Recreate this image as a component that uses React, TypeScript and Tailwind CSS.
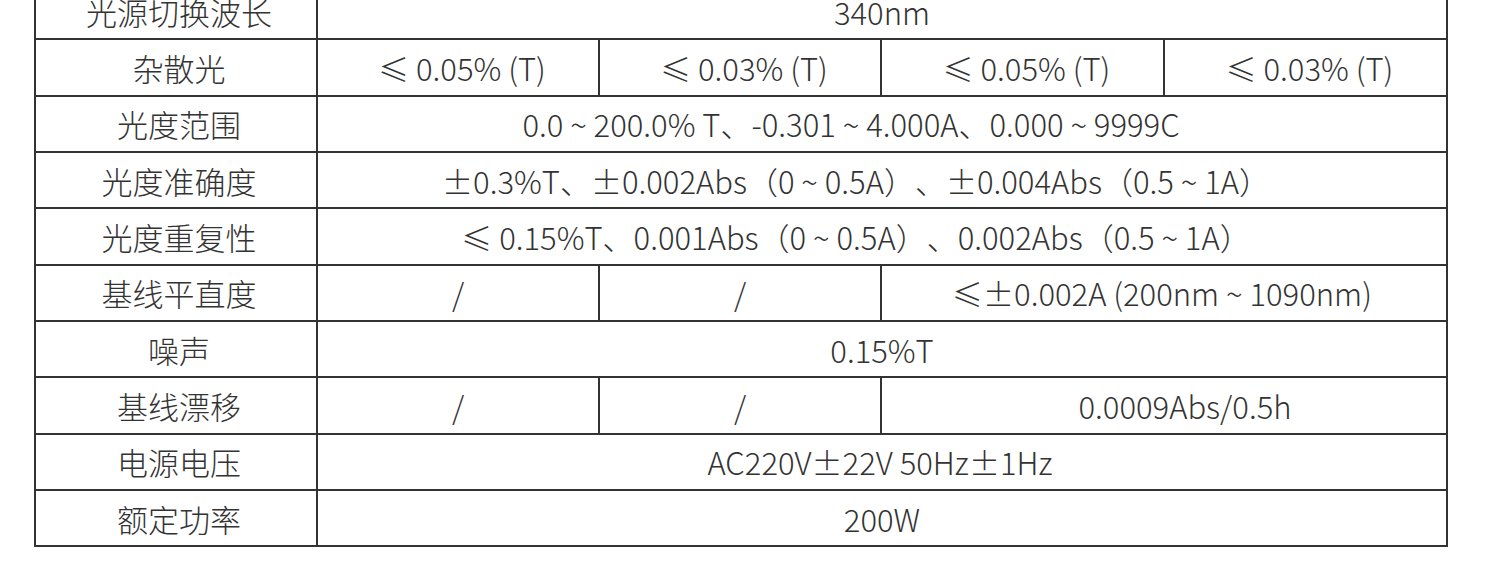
import React from 'react';

type Cell = { text: string; span?: number; pad?: string };
type Row = { label: string; cells: Cell[] };

const rows: Row[] = [
  { label: '光源切换波长', cells: [{ text: '340nm', span: 4 }] },
  {
    label: '杂散光',
    cells: [
      { text: '≤ 0.05% (T)', pad: 'pl-[8px]' },
      { text: '≤ 0.03% (T)', pad: 'pl-[8px]' },
      { text: '≤ 0.05% (T)', pad: 'pl-[8px]' },
      { text: '≤ 0.03% (T)', pad: 'pl-[8px]' },
    ],
  },
  { label: '光度范围', cells: [{ text: '0.0 ~ 200.0% T、-0.301 ~ 4.000A、0.000 ~ 9999C', span: 4, pad: 'pr-[62px]' }] },
  { label: '光度准确度', cells: [{ text: '±0.3%T、±0.002Abs（0 ~ 0.5A）、±0.004Abs（0.5 ~ 1A）', span: 4, pad: 'pr-[52px]' }] },
  { label: '光度重复性', cells: [{ text: '≤ 0.15%T、0.001Abs（0 ~ 0.5A）、0.002Abs（0.5 ~ 1A）', span: 4, pad: 'pr-[52px]' }] },
  {
    label: '基线平直度',
    cells: [{ text: '/' }, { text: '/' }, { text: '≤±0.002A (200nm ~ 1090nm)', span: 2, pad: 'pr-[4px]' }],
  },
  { label: '噪声', cells: [{ text: '0.15%T', span: 4 }] },
  {
    label: '基线漂移',
    cells: [{ text: '/' }, { text: '/' }, { text: '0.0009Abs/0.5h', span: 2, pad: 'pl-[42px]' }],
  },
  { label: '电源电压', cells: [{ text: 'AC220V±22V 50Hz±1Hz', span: 4, pad: 'pr-[4px]' }] },
  { label: '额定功率', cells: [{ text: '200W', span: 4 }] },
];

function SpecTable() {
  return (
    <table className="ml-[34px] mt-[-18px] w-[1412px] table-fixed border-collapse text-[#333] text-[31px] font-light leading-none [text-spacing-trim:space-all]">
      <colgroup>
        <col className="w-[282px]" />
        <col className="w-[282px]" />
        <col className="w-[282px]" />
        <col className="w-[283px]" />
        <col className="w-[283px]" />
      </colgroup>
      <tbody>
        {rows.map((row) => (
          <tr key={row.label} className="h-[56.33px]">
            <td className="border-2 border-[#333] text-center whitespace-nowrap p-0 pl-[6px]">{row.label}</td>
            {row.cells.map((cell, i) => (
              <td
                key={i}
                colSpan={cell.span ?? 1}
                className={`border-2 border-[#333] text-center whitespace-nowrap p-0 ${cell.pad ?? ''}`}
              >
                {cell.text}
              </td>
            ))}
          </tr>
        ))}
      </tbody>
    </table>
  );
}

export default function App() {
  return (
    <div
      className="w-[1500px] h-[573px] overflow-hidden bg-white"
      style={{ fontFamily: '"Noto Sans CJK SC", "Noto Sans", sans-serif' }}
    >
      <SpecTable />
    </div>
  );
}
